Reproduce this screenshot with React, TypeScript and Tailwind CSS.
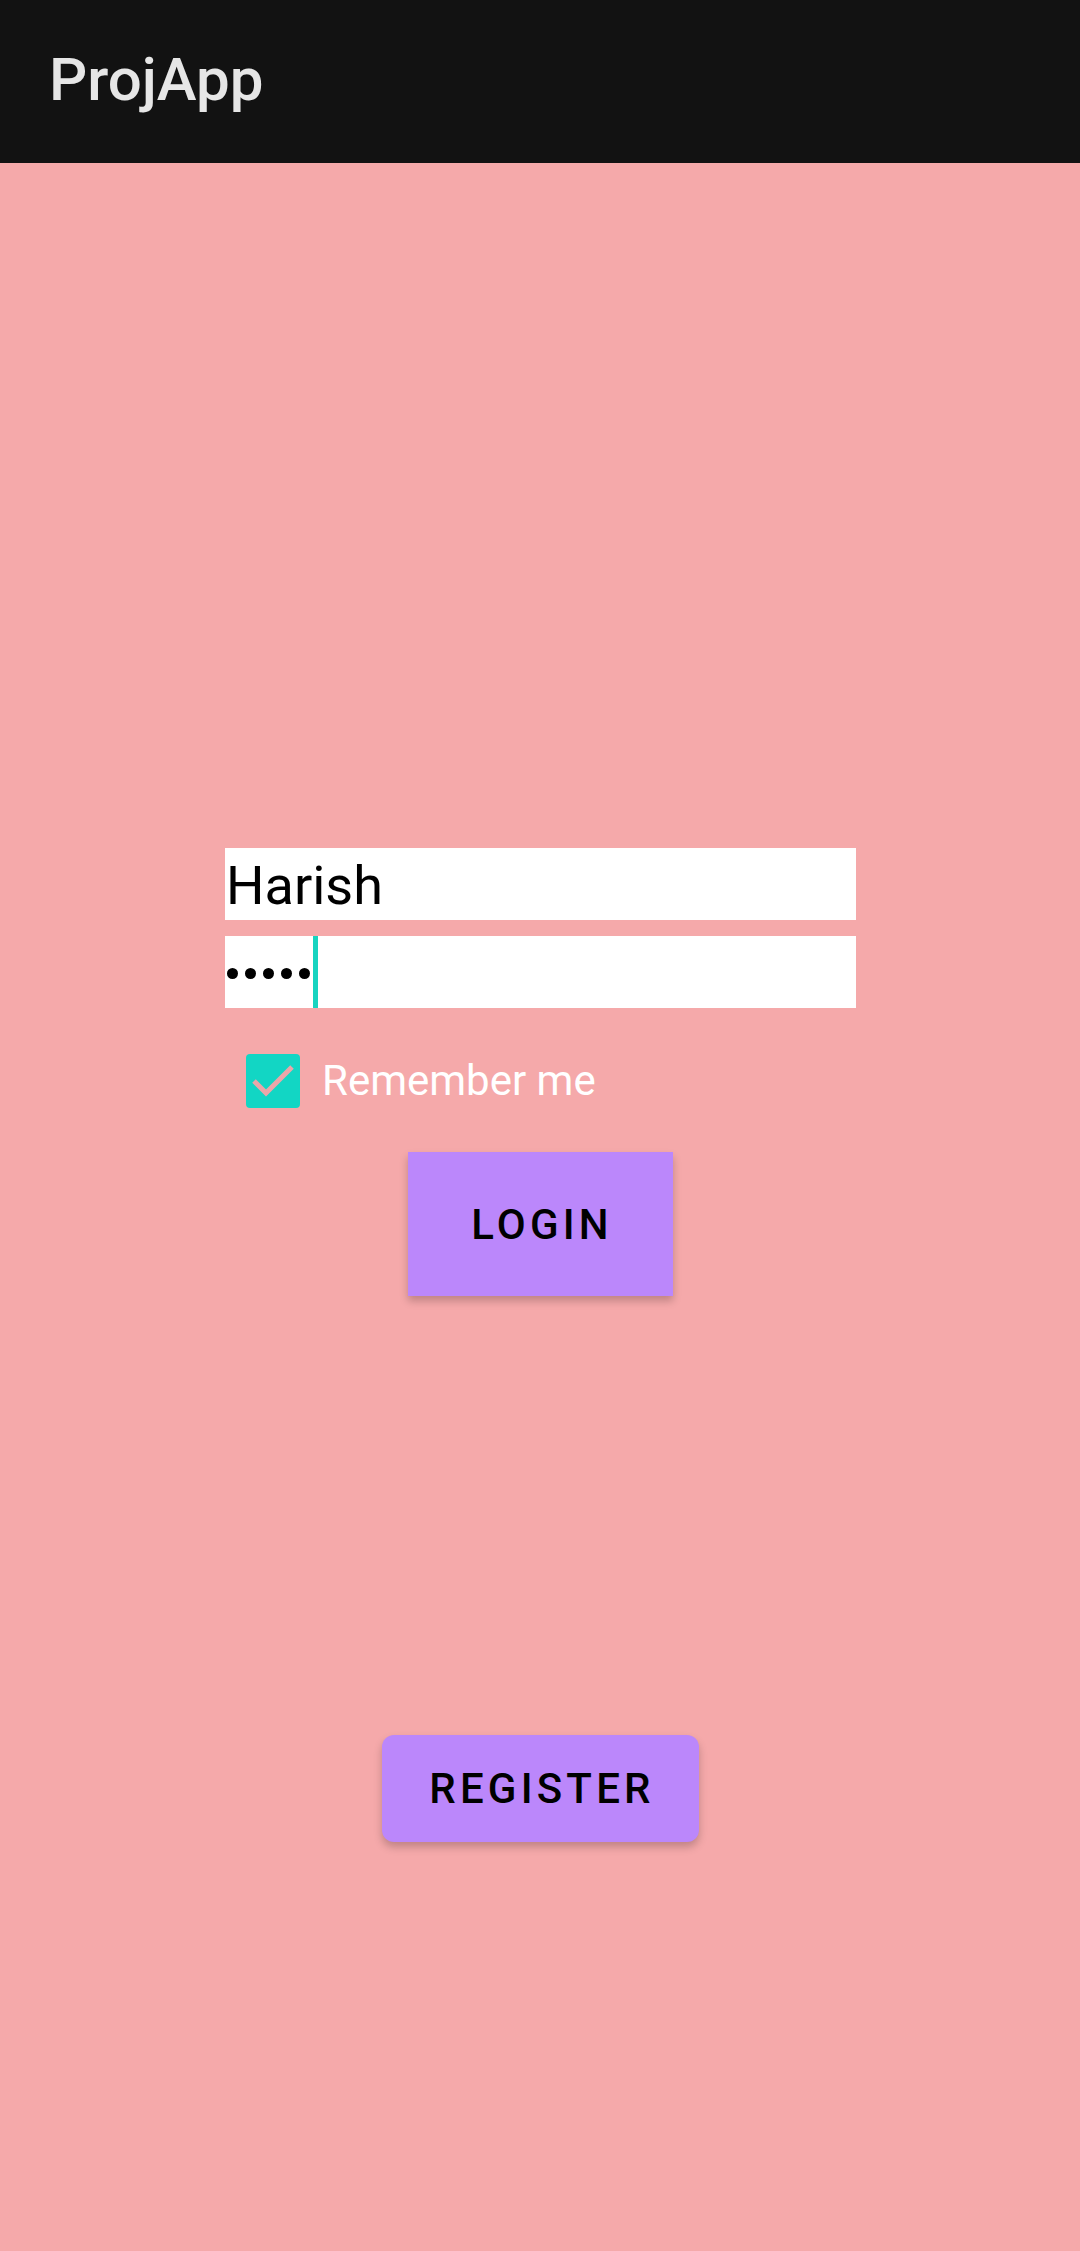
import React from "react";

export default function App() {
  return (
    <div className="w-[1080px] min-h-[2251px] bg-[#f5a9aa] flex flex-col" style={{ fontFamily: "Roboto, 'Liberation Sans', sans-serif" }}>
      <header className="h-[163px] bg-[#121212] flex items-center pl-[49px] shrink-0">
        <span className="text-[60px] leading-none font-medium text-[#e6e6e6] pb-[4px]">
          ProjApp
        </span>
      </header>
      <main className="flex flex-col pt-[685px]">
        <div className="ml-[225px] w-[631px] flex flex-col gap-[16px]">
          <div className="h-[72px] bg-white flex items-center overflow-hidden">
            <span className="text-[54px] leading-none text-black ml-[1px] mt-[4px]">Harish</span>
          </div>
          <div className="h-[72px] bg-white flex items-center">
            <div className="flex items-center gap-[7px] ml-[2px] mt-[2px]">
              <span className="w-[11px] h-[11px] rounded-full bg-black" />
              <span className="w-[11px] h-[11px] rounded-full bg-black" />
              <span className="w-[11px] h-[11px] rounded-full bg-black" />
              <span className="w-[11px] h-[11px] rounded-full bg-black" />
              <span className="w-[11px] h-[11px] rounded-full bg-black" />
            </div>
            <span className="ml-[3px] w-[5px] h-[72px] bg-[#17d4c0]" />
          </div>
        </div>
        <div className="ml-[246px] mt-[46px] flex items-center gap-[22px]">
          <div className="w-[54px] h-[54px] rounded-[4px] bg-[#12d6c4] flex items-center justify-center">
            <svg width="54" height="54" viewBox="0 0 54 54">
              <polyline points="8,27 20,39 46,13" fill="none" stroke="#eba6a9" strokeWidth="5" />
            </svg>
          </div>
          <span className="text-[42px] leading-none text-white">Remember me</span>
        </div>
        <div className="mt-[44px] flex justify-center">
          <button className="w-[265px] h-[144px] bg-[#bb87fb] text-black text-[42px] font-medium tracking-[0.1em] shadow-[0_5px_8px_rgba(0,0,0,0.22)] flex items-center justify-center pl-[4px]">
            LOGIN
          </button>
        </div>
        <div className="mt-[439px] flex justify-center">
          <button className="w-[317px] h-[107px] rounded-[12px] bg-[#bb87fb] text-black text-[42px] font-medium tracking-[0.1em] shadow-[0_5px_8px_rgba(0,0,0,0.22)] flex items-center justify-center pl-[4px]">
            REGISTER
          </button>
        </div>
      </main>
    </div>
  );
}
